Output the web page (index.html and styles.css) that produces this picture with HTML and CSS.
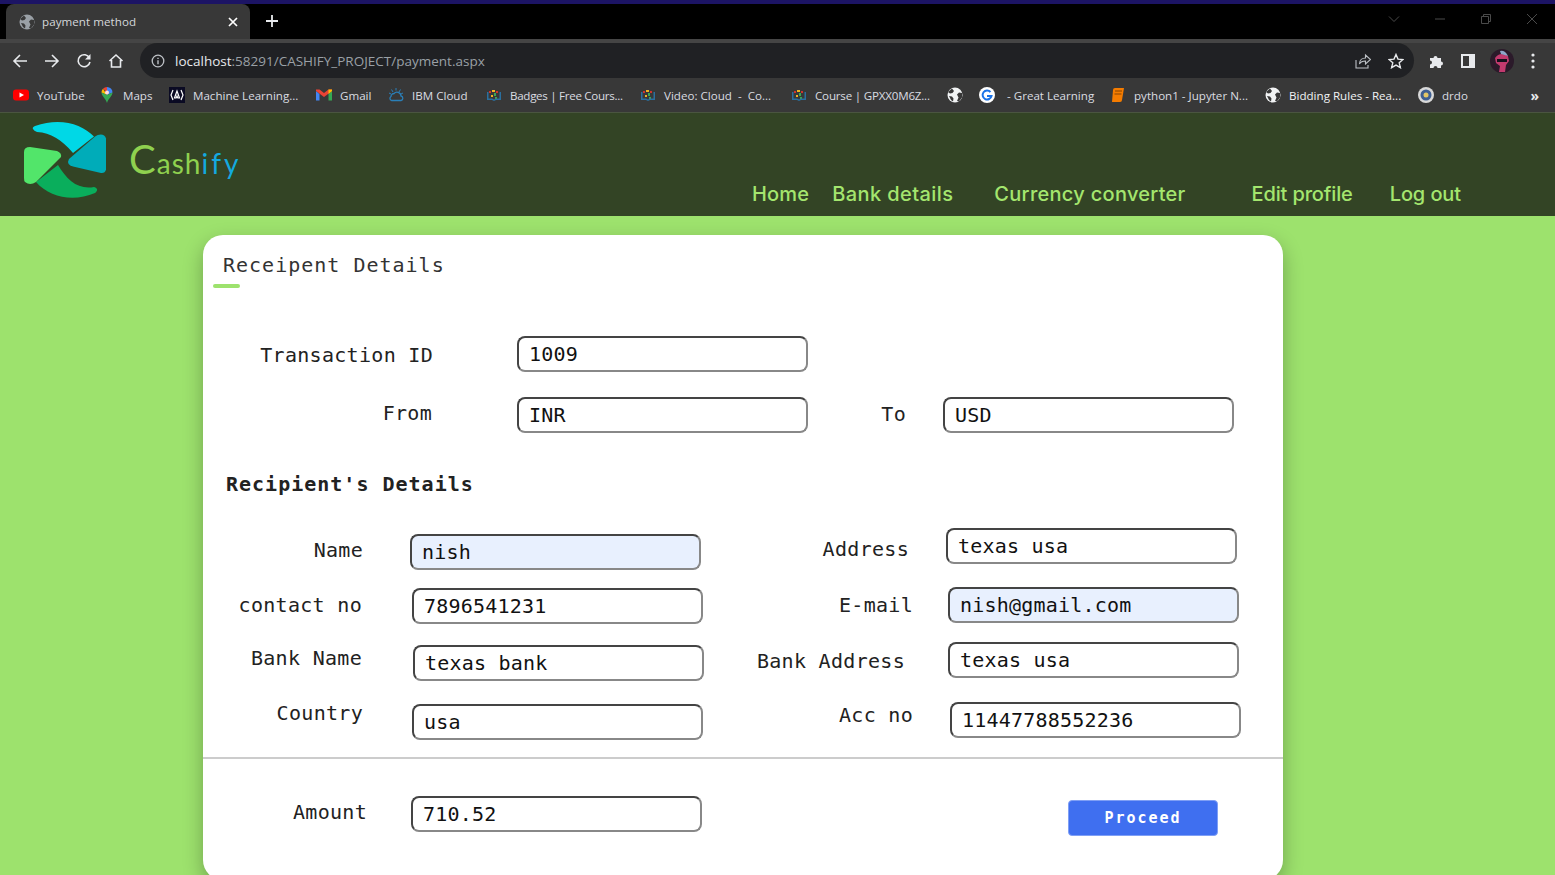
FILE: index.html
```html
<!DOCTYPE html>
<html lang="en">
  <head>
    <meta charset="UTF-8" />
    <meta name="viewport" content="width=device-width, initial-scale=1.0" />
    <title>payment method</title>
    <link rel="stylesheet" href="styles.css">
  </head>
  <body>
    <svg class="defs" width="0" height="0">
      <symbol id="globe" viewBox="0 0 16 16">
        <circle cx="8" cy="8" r="7.5" fill="currentColor" />
        <path d="M5 1.5 7 4 5.5 6 3 6.5 1 5M15 6l-3-.5-2 2 1.5 3L10 14l2 .5 3-4M2 9l3 .5 1.5 2-.5 3L4 13z" fill="#383838" />
      </symbol>
      <symbol id="ibm" viewBox="0 0 16 16">
        <g fill="#d0342c"><rect x="3" y="4" width="2" height="2" /><rect x="10" y="4" width="2" height="2" /></g>
        <g fill="#f0b323"><rect x="6" y="3" width="3" height="2" /><rect x="5" y="8" width="2" height="2" /></g>
        <g fill="#3aa655"><rect x="8" y="6" width="2" height="3" /><rect x="9" y="10" width="2" height="2" /></g>
        <path d="M1 5v8h5l2 1 2-1h5V5h-1.500v6.500H10L8 12.500 6 11.500H2.500V5z" fill="#2a6f9e" />
      </symbol>
    </svg>

    <div class="tabstrip">
      <div class="tab">
        <svg class="ic16 tab-globe"><use href="#globe" /></svg>
        <span class="tab-title">payment method</span>
        <svg class="tab-x" viewBox="0 0 10 10"><path d="M1 1l8 8M9 1l-8 8" stroke="#fff" stroke-width="1.700" /></svg>
      </div>
      <svg class="tab-new" viewBox="0 0 12 12"><path d="M6 0v12M0 6h12" stroke="#e8eaed" stroke-width="1.800" /></svg>
      <div class="winbtns">
        <svg viewBox="0 0 12 12"><path d="M1 3.500l5 5 5-5" fill="none" stroke="#4a4a4a" /></svg>
        <svg viewBox="0 0 12 12"><path d="M1 6h10" stroke="#4a4a4a" /></svg>
        <svg viewBox="0 0 12 12"><path d="M1.500 3.500h7v7h-7zM3.500 3.500v-2h7v7h-2" fill="none" stroke="#4a4a4a" /></svg>
        <svg viewBox="0 0 12 12"><path d="M1 1l10 10M11 1 1 11" stroke="#4a4a4a" /></svg>
      </div>
    </div>

    <div class="toolbar">
      <svg class="tool" viewBox="0 0 16 16"><path d="M15 8H2M8 2 2 8l6 6" fill="none" stroke="#e8eaed" stroke-width="1.600" /></svg>
      <svg class="tool" viewBox="0 0 16 16"><path d="M1 8h13M8 2l6 6-6 6" fill="none" stroke="#e8eaed" stroke-width="1.600" /></svg>
      <svg class="tool" viewBox="0 0 16 16"><path d="M13.500 5A6 6 0 1 0 14 9" fill="none" stroke="#e8eaed" stroke-width="1.600" /><path d="M14.500 1v5.500H9z" fill="#e8eaed" /></svg>
      <svg class="tool" viewBox="0 0 16 16"><path d="M1.500 8 8 2l6.500 6M3.500 7v7h9V7" fill="none" stroke="#e8eaed" stroke-width="1.600" /></svg>
      <div class="omnibox">
        <svg class="ic14" viewBox="0 0 14 14"><circle cx="7" cy="7" r="5.800" fill="none" stroke="#bdc1c6" stroke-width="1.300" /><path d="M7 6.200v4M7 3.700v1.300" stroke="#bdc1c6" stroke-width="1.400" /></svg>
        <span class="url"><b>localhost</b>:58291/CASHIFY_PROJECT/payment.aspx</span>
        <svg class="omni-share" viewBox="0 0 16 16"><path d="M1 7v8h12v-3M4.500 11c0-4 3-6 6-6V2l5 4.500-5 4.500V8c-3 0-5 1-6 3z" fill="none" stroke="#bdc1c6" stroke-width="1.100" /></svg>
        <svg class="omni-star" viewBox="0 0 16 16"><path d="M8 1.500l2 4.600 5 .4-3.800 3.300 1.200 4.900L8 12.100l-4.400 2.600 1.200-4.900L1 6.500l5-.4z" fill="none" stroke="#e8eaed" stroke-width="1.400" /></svg>
      </div>
      <svg class="ext" viewBox="0 0 16 16"><path d="M1 5h3.500a2 2 0 1 1 4 0H12v3.500a2 2 0 1 1 0 4V15H8.500a2 2 0 1 0-4 0H1v-3.500a2 2 0 1 0 0-4z" fill="#e8eaed" /></svg>
      <svg class="side" viewBox="0 0 14 14"><path d="M0 0h14v14H0z" fill="#e8eaed" /><path d="M2 2h6v10H2z" fill="#383838" /></svg>
      <svg class="avatar" viewBox="0 0 24 24">
        <circle cx="12" cy="12" r="12" fill="#2b1a2a" />
        <path d="M5 9q5-7 13-2l1 5-3 4-1 7H9l1-6-4-3z" fill="#c23a6e" />
        <path d="M7 10h10v3H7z" fill="#14101c" />
        <path d="M10 2q5-1 8 5l-7-2z" fill="#8fa6c9" />
      </svg>
      <svg class="dots" viewBox="0 0 4 16"><circle cx="2" cy="2" r="1.600" fill="#e8eaed" /><circle cx="2" cy="8" r="1.600" fill="#e8eaed" /><circle cx="2" cy="14" r="1.600" fill="#e8eaed" /></svg>
    </div>

    <div class="bookmarks">
      <a class="bm bm-yt">
        <svg class="ic16" viewBox="0 0 16 16"><rect y="2.500" width="16" height="11" rx="3" fill="#f00" /><path d="M6.500 5.500 11 8l-4.500 2.500z" fill="#fff" /></svg>YouTube</a>
      <a class="bm bm-maps">
        <svg class="ic16" viewBox="0 0 16 16"><path d="M8 0a5.500 5.500 0 0 1 5.500 5.500L8 8z" fill="#4285f4" /><path d="M8 0a5.500 5.500 0 0 0-4 1.700L8 5.500z" fill="#ea4335" /><path d="M4 1.700a5.500 5.500 0 0 0-1.500 3.800L8 8z" fill="#fbbc04" /><path d="M2.500 5.500C2.500 9 6.500 11 8 16c1.500-5 5.500-7 5.500-10.500L8 8z" fill="#34a853" /><circle cx="8" cy="5.500" r="2" fill="#fdd" /></svg>Maps</a>
      <a class="bm bm-ml">
        <svg class="ic16" viewBox="0 0 16 16"><rect width="16" height="16" fill="#0a0a23" /><path d="M4 3 2 8l2 5M12 3l2 5-2 5M8 4l-2.500 7h1.700L8 9l.8 2h1.700z" fill="none" stroke="#fff" stroke-width="1.200" /></svg>Machine Learning...</a>
      <a class="bm bm-gm">
        <svg class="ic16" viewBox="0 0 16 16"><path d="M0 4v9.500h3.500V7z" fill="#4285f4" /><path d="M12.500 7v6.500H16V4z" fill="#34a853" /><path d="M0 4V2.500l3.500 0L8 6l4.500-3.500 3.500 0V4l-8 6z" fill="#ea4335" /><path d="M12.500 2.500 16 2.500V4l-3.500 3z" fill="#fbbc04" /></svg>Gmail</a>
      <a class="bm bm-ibm">
        <svg class="ic16" viewBox="0 0 16 16"><path d="M3 9.500a3 3 0 0 1 3-3 4 4 0 0 1 7 2.500 2.300 2.300 0 0 1 0 4.500H3.500a2.200 2.200 0 0 1-.5-4z" fill="none" stroke="#2a7fb8" stroke-width="1.300" /><path d="M8 1v2.500M3.500 2.500 5 5M12.500 2.500 11 5M1 6l2 1M15 6l-2 1" stroke="#2a7fb8" /></svg>IBM Cloud</a>
      <a class="bm bm-badge"><svg class="ic16"><use href="#ibm" /></svg>Badges | Free Cours...</a>
      <a class="bm bm-video"><svg class="ic16"><use href="#ibm" /></svg>Video: Cloud &nbsp;- &nbsp;Co...</a>
      <a class="bm bm-course"><svg class="ic16"><use href="#ibm" /></svg>Course | GPXX0M6Z...</a>
      <a class="bm bm-globe"><svg class="ic16"><use href="#globe" /></svg></a>
      <a class="bm bm-gl">
        <svg class="ic16" viewBox="0 0 16 16"><circle cx="8" cy="8" r="8" fill="#fff" /><path d="M11.500 5A4.500 4.500 0 1 0 12.500 9H8" fill="none" stroke="#1a73e8" stroke-width="2" /></svg>
        <span class="gl-text">- Great Learning</span></a>
      <a class="bm bm-py">
        <svg class="ic16" viewBox="0 0 16 16"><path d="M3 3q0-2 2-2h9l-2 12q0 2-2 2H2z" fill="#f57c00" /><path d="M5 4h7M4.500 7h7" stroke="#8a4500" /></svg>python1 - Jupyter N...</a>
      <a class="bm bm-bid"><svg class="ic16"><use href="#globe" /></svg>Bidding Rules - Rea...</a>
      <a class="bm bm-drdo">
        <svg class="ic16" viewBox="0 0 16 16"><circle cx="8" cy="8" r="8" fill="#d9d9d9" /><circle cx="8" cy="8" r="5.500" fill="#3e5f92" /><circle cx="8" cy="8" r="2.500" fill="#e3c766" /></svg>drdo</a>
      <span class="bm-more">&raquo;</span>
    </div>

    <header class="site-head">
      <div class="brand">
        <svg class="logo" viewBox="24 121 84 78">
          <path d="M35 126q-3 1-2 3 1 2 4 3c14 1 24 7 36 21l21-16.500C82 124 60 117 35 126z" fill="#00d8e6" />
          <path d="M95 136.500c4-3 10-3 11 2v31q-1 4-5 3.500l-28-6.500q-7-2-4-7.500z" fill="#00acb9" />
          <path d="M58 165 36 182c14 16 38 20 59 11 3-2 3-5-1-6-16 3-27-7-36-22z" fill="#0aae5c" />
          <path d="M30 147l27 4q5 2 4 6l-25 25q-6 4-11 0-1-1-1-4v-26q0-5 6-5z" fill="#52e56a" />
        </svg>
        <span class="brand-name"><span class="brand-c">C</span>ash<span class="brand-blue">ify</span></span>
      </div>
      <nav class="nav">
        <a class="nav-home">Home</a>
        <a class="nav-bank">Bank details</a>
        <a class="nav-conv">Currency converter</a>
        <a class="nav-edit">Edit profile</a>
        <a class="nav-out">Log out</a>
      </nav>
    </header>

    <main class="card">
      <h2 class="card-title">Receipent Details</h2>
      <div class="title-bar"></div>

      <div class="field f-txn">
        <label class="lbl">Transaction ID</label>
        <input class="box" value="1009" />
      </div>
      <div class="field f-from">
        <label class="lbl">From</label>
        <input class="box" value="INR" />
        <label class="lbl lbl-to">To</label>
        <input class="box box-to" value="USD" />
      </div>

      <h3 class="sub-title">Recipient's Details</h3>

      <div class="cols">
        <div class="col col-left">
          <div class="field f-name">
            <label class="lbl">Name</label>
            <input class="box filled" value="nish" />
          </div>
          <div class="field f-contact">
            <label class="lbl">contact no</label>
            <input class="box" value="7896541231" />
          </div>
          <div class="field f-bank">
            <label class="lbl">Bank Name</label>
            <input class="box" value="texas bank" />
          </div>
          <div class="field f-country">
            <label class="lbl">Country</label>
            <input class="box" value="usa" />
          </div>
        </div>
        <div class="col">
          <div class="field f-addr">
            <label class="lbl">Address</label>
            <input class="box" value="texas usa" />
          </div>
          <div class="field f-mail">
            <label class="lbl">E-mail</label>
            <input class="box filled" value="nish@gmail.com" />
          </div>
          <div class="field f-baddr">
            <label class="lbl">Bank Address</label>
            <input class="box" value="texas usa" />
          </div>
          <div class="field f-acc">
            <label class="lbl">Acc no</label>
            <input class="box" value="11447788552236" />
          </div>
        </div>
      </div>

      <hr class="rule" />

      <div class="field f-amount">
        <label class="lbl">Amount</label>
        <input class="box" value="710.52" />
        <button class="proceed">Proceed</button>
      </div>
    </main>
  </body>
</html>
```

FILE: styles.css
```css
* {
  box-sizing: border-box;
}

html,
body {
  height: 875px;
  overflow: hidden;
}

body {
  margin: 0;
  background-color: #9de26d;
  font-family: "DejaVu Sans Mono", monospace;
}

.defs {
  display: block;
  height: 0;
}

.ic16 {
  width: 16px;
  height: 16px;
  flex: none;
}

.ic14 {
  width: 14px;
  height: 14px;
  flex: none;
}

/* browser chrome */
.tabstrip {
  height: 39px;
  background-color: #000;
  border-top: 4px solid #1c1464;
  display: flex;
  align-items: flex-end;
}

.tab {
  width: 244px;
  height: 35px;
  margin-left: 6px;
  background-color: #383838;
  border-radius: 8px 8px 0 0;
  display: flex;
  align-items: center;
  padding: 0 12px 0 13px;
  color: #d5d7da;
}

.tab-globe {
  color: #9aa0a6;
}

.tab-title {
  flex: 1;
  margin-left: 7px;
  font: 11.6px "Open Sans", sans-serif;
  letter-spacing: 0.05px;
}

.tab-x {
  width: 10px;
  height: 10px;
}

.tab-new {
  width: 12px;
  height: 12px;
  margin: 0 0 12px 16px;
}

.winbtns {
  margin-left: auto;
  height: 35px;
  display: flex;
  align-items: center;
  padding: 0 17px 6px 0;
  gap: 34px;
}

.winbtns svg {
  width: 12px;
  height: 12px;
}

.toolbar {
  height: 39px;
  padding-left: 12px;
  background-color: #383838;
  border-top: 4px solid #454545;
  display: flex;
  align-items: center;
}

.tool {
  width: 16px;
  height: 16px;
  margin-right: 16px;
  flex: none;
}

.omnibox {
  width: 1274px;
  height: 35px;
  border-radius: 18px;
  background-color: #202124;
  display: flex;
  align-items: center;
  padding: 0 10px 0 11px;
}

.url {
  margin-left: 10px;
  font: 13.5px "Open Sans", sans-serif;
  color: #9aa0a6;
}

.url b {
  font-weight: 400;
  color: #e8eaed;
}

.omni-share {
  width: 16px;
  height: 16px;
  margin-left: auto;
}

.omni-star {
  width: 16px;
  height: 16px;
  margin-left: 17px;
}

.ext {
  width: 16px;
  height: 16px;
  margin-left: 15px;
}

.side {
  width: 14px;
  height: 14px;
  margin-left: 16px;
}

.avatar {
  width: 24px;
  height: 24px;
  margin-left: 15px;
}

.dots {
  width: 4px;
  height: 16px;
  margin-left: 17px;
}

.bookmarks {
  height: 35px;
  background-color: #383838;
  border-bottom: 1px solid #4a5540;
  display: flex;
  align-items: center;
  padding-left: 13px;
}

.bm {
  flex: none;
  display: flex;
  align-items: center;
  gap: 8px;
  font: 11.6px "Open Sans", sans-serif;
  color: #dadce0;
  white-space: nowrap;
}

.bm-yt {
  width: 86px;
}

.bm-maps {
  width: 70px;
}

.bm-ml {
  width: 147px;
}

.bm-gm {
  width: 72px;
}

.bm-ibm {
  width: 98px;
}

.bm-badge {
  width: 154px;
  letter-spacing: -0.3px;
}

.bm-video {
  width: 151px;
}

.bm-course {
  width: 156px;
  letter-spacing: -0.2px;
}

.bm-globe {
  width: 32px;
  color: #f1f3f4;
}

.bm-gl {
  width: 131px;
}

.bm-py {
  width: 155px;
}

.bm-bid {
  width: 153px;
  color: #f1f3f4;
}

.gl-text {
  margin-left: 4px;
}

.bm-more {
  margin-left: auto;
  margin-right: 16px;
  color: #e8eaed;
  font: 700 14px "Open Sans", sans-serif;
}

/* site header */
.site-head {
  height: 103px;
  background-color: #334425;
  display: flex;
}

.brand {
  display: flex;
  width: 752px;
  padding: 8px 0 0 24px;
}

.logo {
  width: 84px;
  height: 78px;
  flex: none;
}

.brand-name {
  margin: 15px 0 0 21px;
  font: 28px/46px Lato, sans-serif;
  color: #8fd14f;
  letter-spacing: 1px;
}

.brand-c {
  font-size: 40px;
}

.brand-blue {
  color: #14a9df;
  letter-spacing: 3px;
}

.nav {
  display: flex;
  align-items: flex-end;
  padding-bottom: 8px;
  font: 500 20px/28px Inter, sans-serif;
  color: #a4e66e;
  white-space: nowrap;
}

.nav-home {
  letter-spacing: 0.2px;
}

.nav-bank {
  margin-left: 23px;
  letter-spacing: 0.4px;
}

.nav-conv {
  margin-left: 41px;
  letter-spacing: 0.28px;
}

.nav-edit {
  margin-left: 66px;
  letter-spacing: -0.15px;
}

.nav-out {
  margin-left: 37px;
  letter-spacing: -0.1px;
}

/* card */
.card {
  width: 1080px;
  height: 645px;
  margin: 19px 0 0 203px;
  background-color: #fff;
  border-radius: 20px;
  box-shadow: 0 8px 20px rgba(0, 0, 0, 0.28);
  overflow: hidden;
  color: #222;
}

.card-title {
  margin: 18px 0 0 20px;
  font-size: 20px;
  line-height: 24px;
  font-weight: 400;
  letter-spacing: 1px;
  color: #333;
  white-space: nowrap;
}

.title-bar {
  width: 27px;
  height: 4px;
  margin: 7px 0 0 10px;
  border-radius: 2px;
  background-color: #9de26d;
}

.sub-title {
  margin: 39px 0 0 23px;
  font-size: 20px;
  line-height: 24px;
  font-weight: 700;
  letter-spacing: 1px;
}

.field {
  display: flex;
  align-items: flex-start;
}

.lbl {
  flex: none;
  font-size: 20px;
  line-height: 24px;
  text-align: right;
  white-space: nowrap;
  letter-spacing: 0.3px;
}

.box {
  flex: none;
  width: 291px;
  height: 36px;
  padding: 0 10px;
  border: 2px solid;
  border-color: #444 #888 #888 #444;
  border-radius: 8px;
  background-color: #fff;
  font-family: "DejaVu Sans Mono", monospace;
  font-size: 20px;
  letter-spacing: 0.2px;
  color: #111;
}

.filled {
  background-color: #e8f0fe;
}

.f-txn {
  margin-top: 48px;
}

.f-txn .lbl {
  width: 230px;
  margin-top: 7px;
}

.f-txn .box {
  margin-left: 84px;
}

.f-from {
  margin-top: 25px;
}

.f-from .lbl {
  width: 229px;
  margin-top: 4px;
}

.f-from .box {
  margin-left: 85px;
}

.f-from .lbl-to {
  width: 98px;
  margin-top: 5px;
}

.f-from .box-to {
  margin-left: 37px;
}

.cols {
  display: flex;
  margin-top: 32px;
}

.col-left {
  width: 537px;
  padding-top: 6px;
}

.f-name .lbl {
  width: 160px;
  margin-top: 4px;
}

.f-name .box {
  margin-left: 47px;
}

.f-contact {
  margin-top: 18px;
}

.f-contact .lbl {
  width: 159px;
  margin-top: 5px;
}

.f-contact .box {
  margin-left: 50px;
}

.f-bank {
  margin-top: 21px;
}

.f-bank .lbl {
  width: 159px;
  margin-top: 1px;
}

.f-bank .box {
  margin-left: 51px;
}

.f-country {
  margin-top: 23px;
}

.f-country .lbl {
  width: 160px;
  margin-top: -3px;
}

.f-country .box {
  margin-left: 49px;
}

.f-addr .lbl {
  width: 169px;
  margin-top: 9px;
}

.f-addr .box {
  margin-left: 37px;
}

.f-mail {
  margin-top: 23px;
}

.f-mail .lbl {
  width: 173px;
  margin-top: 6px;
}

.f-mail .box {
  margin-left: 35px;
}

.f-baddr {
  margin-top: 19px;
}

.f-baddr .lbl {
  width: 165px;
  margin-top: 7px;
}

.f-baddr .box {
  margin-left: 43px;
}

.f-acc {
  margin-top: 24px;
}

.f-acc .lbl {
  width: 173px;
  margin-top: 1px;
}

.f-acc .box {
  margin-left: 37px;
}

.rule {
  height: 2px;
  margin: 17px 0 0;
  border: 0;
  background-color: #ccc;
}

.f-amount {
  margin-top: 37px;
}

.f-amount .lbl {
  width: 164px;
  margin-top: 4px;
}

.f-amount .box {
  margin-left: 44px;
}

.proceed {
  width: 150px;
  height: 36px;
  margin: 4px 0 0 366px;
  border: 1px solid #7f9ff5;
  border-radius: 4px;
  background-color: #3f6ff0;
  color: #fff;
  font-family: "DejaVu Sans Mono", monospace;
  font-size: 15px;
  font-weight: 700;
  letter-spacing: 2px;
}
```
